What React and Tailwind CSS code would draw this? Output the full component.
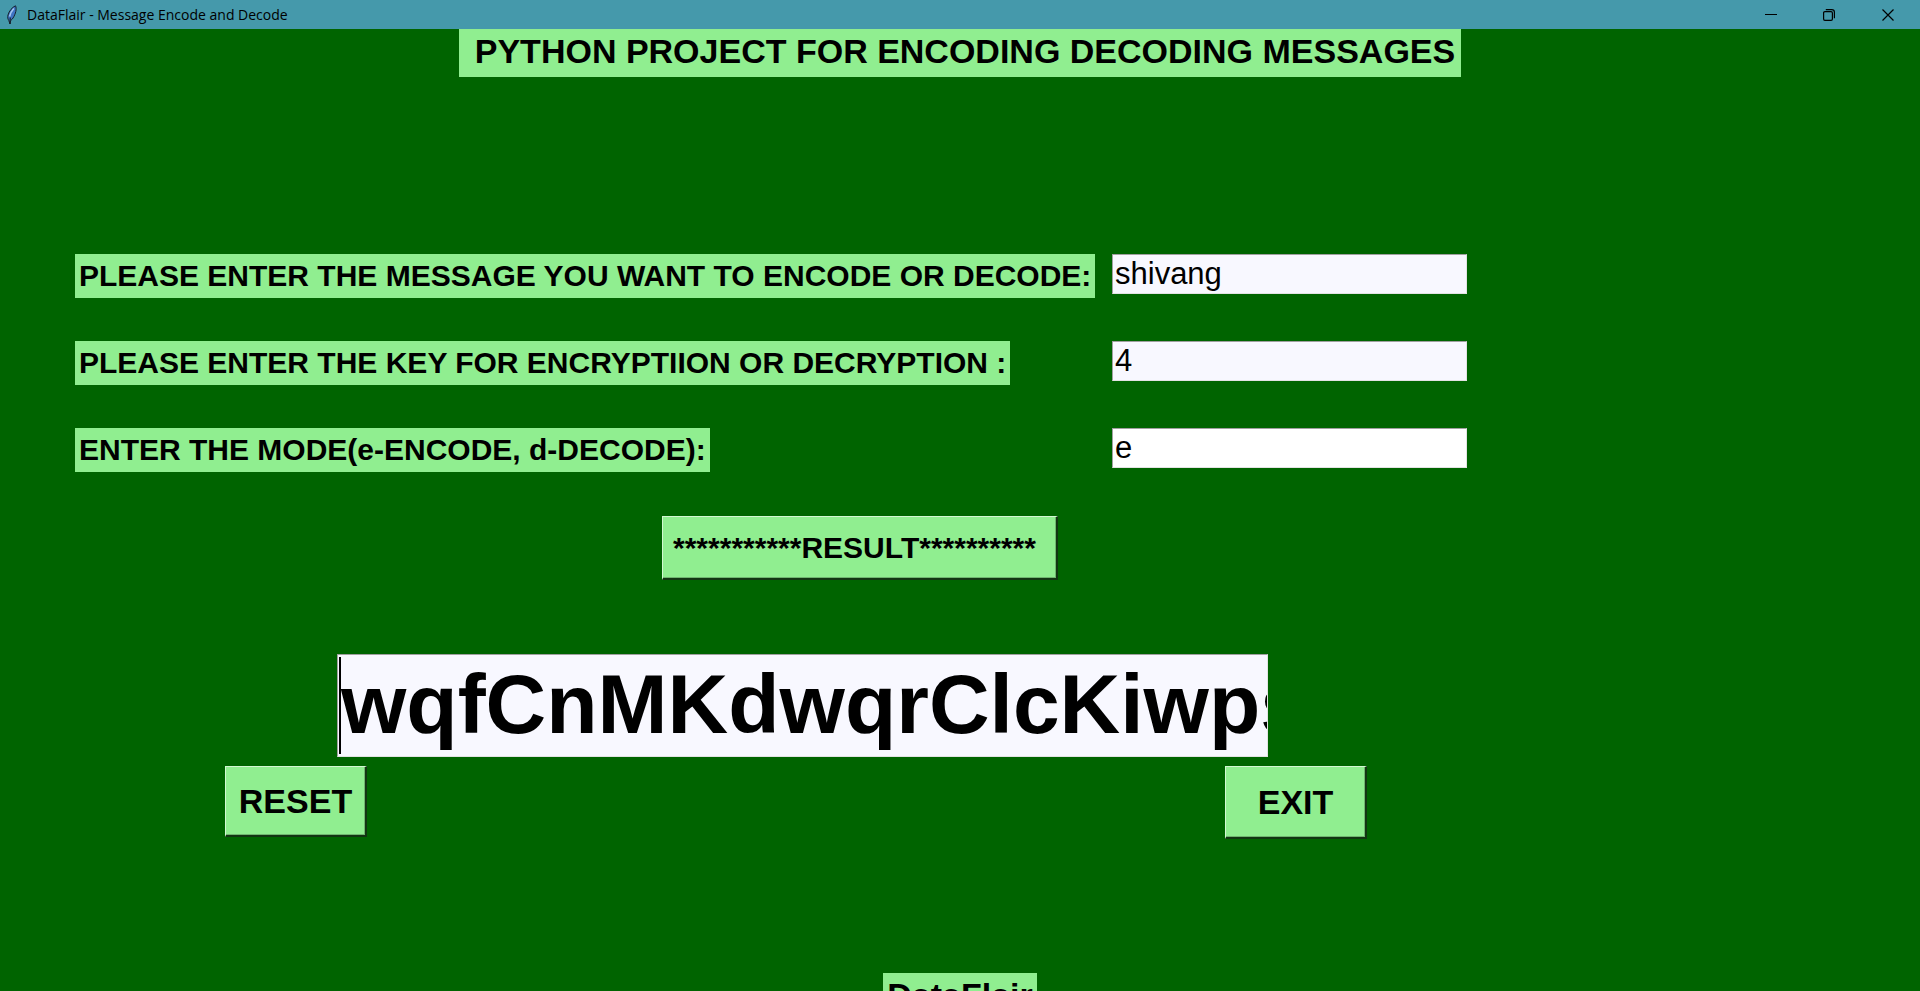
import { useState } from "react";

const labelClass =
  "justify-self-start whitespace-nowrap bg-[#90ee90] px-1 text-[30px] leading-[44px] font-bold";
const entryClass =
  "h-10 w-full border border-t-[#a0a0a0] border-l-[#a0a0a0] border-r-[#e3e3e3] border-b-[#e3e3e3] pl-[2px] text-[31px] leading-[38px] outline-none";
const buttonClass =
  "border-t border-l border-r-2 border-b-2 border-t-[#d2f8d2] border-l-[#d2f8d2] border-r-[#123512] border-b-[#123512] bg-[#90ee90] font-bold whitespace-pre shadow-[inset_-1px_-1px_0_#6fb56f]";

function FeatherIcon() {
  return (
    <svg width="12" height="20" viewBox="0 0 12 20" aria-hidden="true">
      <path
        d="M9.500.8C6.500 2 3 6 2 10c-.5 2-.3 4 .8 5.500L4 19l.6-3.300C7 14 9 10 9.800 6.500c.5-2.200.4-4.500-.3-5.700Z"
        fill="#3f74c4"
        stroke="#16202c"
        strokeWidth="1"
      />
      <path d="M7.800 3.500C6 5.500 4.200 8.500 3.600 11.500" fill="none" stroke="#a9c8f0" strokeWidth="1.500" />
      <path d="M4.300 12.500C4.100 15 4 17 4 19" fill="none" stroke="#16202c" strokeWidth="1.200" />
    </svg>
  );
}

function TitleBar() {
  return (
    <header className="flex h-[29px] shrink-0 items-center bg-[#4599ab] pr-[2px] pl-[6px]">
      <FeatherIcon />
      <span className="ml-[9px] flex-1 font-['Open_Sans',sans-serif] text-[14px] leading-5">
        DataFlair - Message Encode and Decode
      </span>
      <button aria-label="Minimize" className="flex h-full w-[58px] items-center justify-center">
        <svg width="12" height="12" viewBox="0 0 12 12" stroke="#000">
          <path d="M0 5.500h12" />
        </svg>
      </button>
      <button aria-label="Restore" className="flex h-full w-[58px] items-center justify-center">
        <svg width="12" height="12" viewBox="0 0 12 12" fill="none" stroke="#000" strokeWidth="1.200">
          <rect x=".6" y="2.600" width="8.800" height="8.800" rx="1.300" />
          <path d="M2.800.6h6a2.600 2.600 0 0 1 2.600 2.600v6" />
        </svg>
      </button>
      <button aria-label="Close" className="flex h-full w-[60px] items-center justify-center">
        <svg width="12" height="12" viewBox="0 0 12 12" stroke="#000" strokeWidth="1.200">
          <path d="M.5.5l11 11M11.500.5l-11 11" />
        </svg>
      </button>
    </header>
  );
}

export default function App() {
  const [message, setMessage] = useState("shivang");
  const [key, setKey] = useState("4");
  const [mode, setMode] = useState("e");
  const [result, setResult] = useState("wqfCnMKdwqrClcKiwps=");

  const reset = () => {
    setMessage("");
    setKey("");
    setMode("");
    setResult("");
  };

  return (
    <div className="flex h-screen flex-col overflow-hidden bg-[#006400] font-['Liberation_Sans',Arial,sans-serif] text-black">
      <TitleBar />
      <main className="flex flex-col">
        <h1 className="self-center whitespace-pre bg-[#90ee90] pr-[6px] pb-1 pl-4 text-[34px] leading-[44px] font-bold">
          PYTHON PROJECT FOR ENCODING DECODING MESSAGES
        </h1>

        <div className="mt-[177px] ml-[75px] grid grid-cols-[1018px_355px] items-start gap-x-[19px] gap-y-[43px]">
          <label htmlFor="message" className={labelClass}>
            PLEASE ENTER THE MESSAGE YOU WANT TO ENCODE OR DECODE:
          </label>
          <input
            id="message"
            className={`${entryClass} bg-[#f8f8ff]`}
            value={message}
            onChange={(e) => setMessage(e.target.value)}
          />
          <label htmlFor="key" className={labelClass}>
            PLEASE ENTER THE KEY FOR ENCRYPTIION OR DECRYPTION :
          </label>
          <input
            id="key"
            className={`${entryClass} bg-[#f8f8ff]`}
            value={key}
            onChange={(e) => setKey(e.target.value)}
          />
          <label htmlFor="mode" className={labelClass}>
            ENTER THE MODE(e-ENCODE, d-DECODE):
          </label>
          <input
            id="mode"
            className={`${entryClass} bg-white`}
            value={mode}
            onChange={(e) => setMode(e.target.value)}
          />
        </div>

        <button className={`${buttonClass} mt-[44px] ml-[662px] h-[64px] w-[396px] self-start pr-[10px] text-[30px]`}>
          ***********RESULT**********
        </button>

        <div className="relative mt-[74px] ml-[337px] h-[103px] w-[931px]">
          <input
            aria-label="Result"
            className="h-full w-full border border-t-[#a0a0a0] border-l-[#a0a0a0] border-r-[#e3e3e3] border-b-[#e3e3e3] bg-[#f8f8ff] pb-[2px] pl-[3px] text-[84px] leading-[96px] font-bold outline-none"
            value={result}
            onChange={(e) => setResult(e.target.value)}
          />
          <span className="absolute top-[3px] left-[2px] h-[97px] w-[2px] bg-black" />
        </div>

        <div className="mt-[9px] ml-[225px] flex w-[1142px] items-start justify-between text-[34px]">
          <button className={`${buttonClass} h-[71px] w-[142px]`} onClick={reset}>
            RESET
          </button>
          <button className={`${buttonClass} h-[73px] w-[142px]`}>EXIT</button>
        </div>

        <footer className="mt-[134px] self-center bg-[#90ee90] px-1 pb-1 text-[34px] leading-[44px] font-bold">
          DataFlair
        </footer>
      </main>
    </div>
  );
}
